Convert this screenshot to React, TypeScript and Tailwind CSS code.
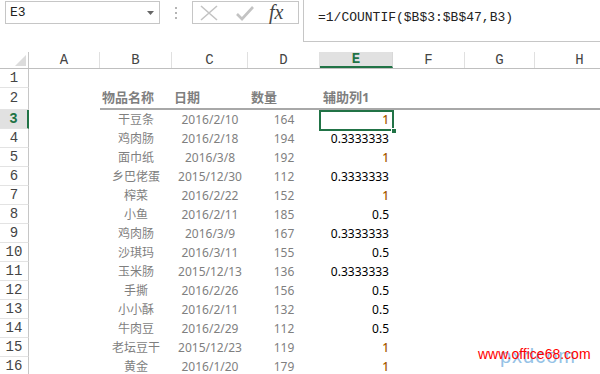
import React from "react";

const COLS = [
  { key: "A", w: 71 },
  { key: "B", w: 72 },
  { key: "C", w: 76 },
  { key: "D", w: 72 },
  { key: "E", w: 73 },
  { key: "F", w: 72 },
  { key: "G", w: 70 },
  { key: "H", w: 90 },
];

const ROWS: [string, string, number, string][] = [
  ["干豆条", "2016/2/10", 164, "1"],
  ["鸡肉肠", "2016/2/18", 194, "0.3333333"],
  ["面巾纸", "2016/3/8", 192, "1"],
  ["乡巴佬蛋", "2015/12/30", 112, "0.3333333"],
  ["榨菜", "2016/2/22", 152, "1"],
  ["小鱼", "2016/2/11", 185, "0.5"],
  ["鸡肉肠", "2016/3/9", 167, "0.3333333"],
  ["沙琪玛", "2016/3/11", 155, "0.5"],
  ["玉米肠", "2015/12/13", 136, "0.3333333"],
  ["手撕", "2016/2/26", 156, "0.5"],
  ["小小酥", "2016/2/11", 132, "0.5"],
  ["牛肉豆", "2016/2/29", 112, "0.5"],
  ["老坛豆干", "2015/12/23", 119, "1"],
  ["黄金", "2016/1/20", 179, "1"],
];

const mono = "font-['Liberation_Mono',monospace]";
const sans = "font-['Noto_Sans','Noto_Sans_CJK_SC',sans-serif]";

function RowHead({ n, active, h }: { n: number; active?: boolean; h: string }) {
  return (
    <div
      className={`w-[29px] shrink-0 ${h} flex items-center justify-center border-b border-[#e3e3e3] ${mono} text-[14px] ${
        active
          ? "bg-[#e1e1e1] border-r-2 border-r-[#217346] text-[#217346] font-bold"
          : "border-r border-r-[#c6c6c6] text-[#444]"
      }`}
    >
      {n}
    </div>
  );
}

function FormulaBar() {
  return (
    <div className="flex items-start h-[52px] bg-white">
      <div className="ml-[5px] mt-[1px] w-[155px] h-[23px] border border-[#c6c6c6] flex items-center justify-between pl-[4px] pr-[5px]">
        <span className={`${mono} text-[13px] text-[#222]`}>E3</span>
        <svg width="7" height="4" viewBox="0 0 7 4">
          <path d="M0 0h7L3.5 4z" fill="#666" />
        </svg>
      </div>
      <div className="w-[32px] h-[25px] flex flex-col items-center justify-center gap-[3px]">
        <span className="w-[2px] h-[2px] bg-[#b5b5b5]" />
        <span className="w-[2px] h-[2px] bg-[#b5b5b5]" />
        <span className="w-[2px] h-[2px] bg-[#b5b5b5]" />
      </div>
      <div className="mt-[1px] w-[107px] h-[23px] border border-[#c6c6c6] flex items-center">
        <svg className="ml-[6px]" width="20" height="16" viewBox="0 0 20 16">
          <path d="M2 1l16 14M18 1L2 15" stroke="#c3c3c3" strokeWidth="1.6" fill="none" />
        </svg>
        <svg className="ml-[16px]" width="20" height="16" viewBox="0 0 20 16">
          <path d="M2 9l5 5L18 2" stroke="#c3c3c3" strokeWidth="2.6" fill="none" />
        </svg>
        <span className="ml-[14px] font-['Liberation_Serif',serif] italic text-[20px] leading-none text-[#444] -mt-[2px]">
          fx
        </span>
      </div>
      <div className="ml-[4px] flex-1 h-[42px] border-l border-b border-[#c6c6c6] pl-[14px] pt-[3px]">
        <span className={`${mono} text-[13px] text-[#222]`}>=1/COUNTIF($B$3:$B$47,B3)</span>
      </div>
    </div>
  );
}

function ColumnHeader() {
  return (
    <div className="flex h-[17px] border-b border-[#bfbfbf]">
      <div className="w-[29px] shrink-0 border-r border-[#c6c6c6] relative">
        <svg className="absolute left-[15px] top-[3px]" width="11" height="11" viewBox="0 0 11 11">
          <path d="M11 0V11H0z" fill="#dcdcdc" />
        </svg>
      </div>
      {COLS.map((c) =>
        c.key === "E" ? (
          <div
            key={c.key}
            style={{ width: c.w }}
            className={`shrink-0 bg-[#e1e1e1] border-b-2 border-[#217346] border-r border-r-[#d8d8d8] flex items-center justify-center ${mono} text-[14px] font-bold text-[#217346]`}
          >
            {c.key}
          </div>
        ) : (
          <div
            key={c.key}
            style={{ width: c.w }}
            className={`shrink-0 border-r border-[#e0e0e0] flex items-center justify-center ${mono} text-[14px] text-[#444]`}
          >
            {c.key}
          </div>
        )
      )}
    </div>
  );
}

export default function App() {
  return (
    <div className="w-[600px] h-[374px] overflow-hidden bg-white relative">
      <FormulaBar />
      <ColumnHeader />

      {/* row 1 */}
      <div className="flex h-[19px]">
        <RowHead n={1} h="h-[19px]" />
      </div>

      {/* row 2: headers */}
      <div className="flex h-[22px]">
        <RowHead n={2} h="h-[22px]" />
        <div className="w-[71px] shrink-0" />
        <div className={`flex-1 flex border-b-2 border-[#a8a8a8] ${sans} text-[13px] font-bold text-[#7f7f7f]`}>
          <div className="w-[72px] shrink-0 pl-[2px] flex items-center">物品名称</div>
          <div className="w-[76px] shrink-0 pl-[2px] flex items-center">日期</div>
          <div className="w-[72px] shrink-0 pl-[3px] flex items-center">数量</div>
          <div className="w-[73px] shrink-0 pl-[3px] flex items-center">辅助列1</div>
        </div>
      </div>

      {ROWS.map(([name, date, qty, aux], i) => (
        <div key={i} className={`flex h-[19px] ${sans} text-[12px]`}>
          <RowHead n={i + 3} active={i === 0} h="h-[19px]" />
          <div className="w-[71px] shrink-0" />
          <div className="w-[72px] shrink-0 flex items-center justify-center text-[#7f7f7f]">{name}</div>
          <div className="w-[76px] shrink-0 flex items-center justify-center text-[#7f7f7f]">{date}</div>
          <div className="w-[72px] shrink-0 flex items-center justify-center text-[#7f7f7f]">{qty}</div>
          <div
            className={`w-[73px] shrink-0 flex items-center justify-end pr-[4px] relative ${
              aux === "1" ? "text-[#a65800] font-medium" : "text-black"
            }`}
          >
            {aux}
            {i === 0 && (
              <>
                <div className="absolute left-[-1px] right-[-1px] top-0 bottom-[-2px] border-2 border-[#217346]" />
                <div className="absolute right-[-4px] bottom-[-5px] w-[6px] h-[6px] bg-[#217346] border border-white" />
              </>
            )}
          </div>
        </div>
      ))}

      {/* watermark */}
      <div className="absolute left-[500px] top-[341px] font-['Liberation_Sans',sans-serif] text-[20px] text-[#6aa9dc] opacity-70 tracking-[1px]">
        pxdcom
      </div>
      <div className="absolute left-[478px] top-[344px] font-['Liberation_Sans',sans-serif] text-[14px] text-[#ff0000]">
        www.office68.com
      </div>
    </div>
  );
}
